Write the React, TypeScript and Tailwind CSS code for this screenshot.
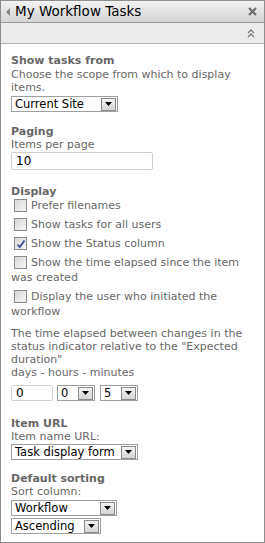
import React from "react";

const font = { fontFamily: '"DejaVu Sans", Verdana, sans-serif' };

function Arrow() {
  return (
    <span className="ml-[2px] flex h-[13px] w-[15px] shrink-0 items-center justify-center border border-[#8a8a8a] bg-gradient-to-b from-[#f4f4f4] to-[#d4d4d4]">
      <svg width="7" height="4" viewBox="0 0 7 4">
        <path d="M0 0h7L3.5 4z" fill="#000" />
      </svg>
    </span>
  );
}

function Select({ value, width }: { value: string; width: string }) {
  return (
    <div
      className={`flex h-[16px] items-center whitespace-nowrap border border-[#a0a0a0] bg-white pl-[3px] pr-[1px] text-[11.5px] leading-[14px] text-black ${width}`}
    >
      <span className="flex-1">{value}</span>
      <Arrow />
    </div>
  );
}

function Check({ label, checked }: { label: string; checked?: boolean }) {
  return (
    <div className="mt-[4px] leading-[15px]">
      <span className="relative ml-[3px] mr-[4px] inline-block h-[13px] w-[13px] border border-[#8a8a8a] bg-gradient-to-br from-[#d8d8d8] to-[#f6f6f6] align-[-3px]">
        {checked && (
          <svg className="absolute left-[1px] top-[1px]" width="10" height="10" viewBox="0 0 10 10">
            <path d="M1.5 5.5l2.3 2.5L8.5 1.5" stroke="#3c4f9a" strokeWidth="1.8" fill="none" />
          </svg>
        )}
      </span>
      {label}
    </div>
  );
}

function Heading({ children }: { children: React.ReactNode }) {
  return <div className="font-bold leading-[13px]">{children}</div>;
}

export default function App() {
  return (
    <div style={font} className="h-[543px] w-[265px] bg-white">
      <div className="flex h-[543px] flex-col border border-[#8e8e8e]">
        <div className="flex h-[22px] shrink-0 items-center border-b border-[#9c9c9c] bg-gradient-to-b from-[#f3f3f3] to-[#d3d3d3]">
          <svg className="ml-[5px] mr-[5px]" width="4" height="8" viewBox="0 0 4 8">
            <path d="M4 0v8L0 4z" fill="#8a8a8a" />
          </svg>
          <span className="flex-1 text-[13.5px] text-black">My Workflow Tasks</span>
          <svg className="mr-[7px]" width="9" height="9" viewBox="0 0 9 9">
            <path d="M1 1l7 7M8 1L1 8" stroke="#6e6e6e" strokeWidth="2.2" />
          </svg>
        </div>
        <div className="flex h-[21px] shrink-0 items-center justify-end border-b border-[#b4b4b4] bg-[#ebebeb] pr-[9px]">
          <svg width="8" height="9" viewBox="0 0 8 9">
            <path d="M1 4l3-3 3 3M1 8l3-3 3 3" stroke="#7a7a7a" strokeWidth="1.3" fill="none" />
          </svg>
        </div>
        <div className="flex-1 pl-[10px] pt-[10px] text-[11px] leading-[13px] text-[#676767]">
          <Heading>Show tasks from</Heading>
          <div className="mt-[1px] pr-[10px]">Choose the scope from which to display items.</div>
          <div className="mt-[2px]">
            <Select value="Current Site" width="w-[107px]" />
          </div>

          <div className="mt-[13px]">
            <Heading>Paging</Heading>
          </div>
          <div>Items per page</div>
          <div className="mt-[1px] flex h-[18px] w-[142px] items-center rounded-[2px] border border-[#cfcfcf] pl-[4px] text-[12px] text-black">
            10
          </div>

          <div className="mt-[15px]">
            <Heading>Display</Heading>
          </div>
          <div className="-mt-[4px] pr-[6px]">
            <Check label="Prefer filenames" />
            <Check label="Show tasks for all users" />
            <Check label="Show the Status column" checked />
            <Check label="Show the time elapsed since the item was created" />
            <Check label="Display the user who initiated the workflow" />
          </div>

          <div className="mt-[8px] pr-[8px]">
            The time elapsed between changes in the status indicator relative to the "Expected duration"
          </div>
          <div>days - hours - minutes</div>
          <div className="mt-[6px] flex items-center">
            <div className="flex h-[16px] w-[42px] items-center rounded-[2px] border border-[#cfcfcf] pl-[4px] text-[12px] leading-[14px] text-black">
              0
            </div>
            <div className="ml-[4px]">
              <Select value="0" width="w-[38px]" />
            </div>
            <div className="ml-[5px]">
              <Select value="5" width="w-[38px]" />
            </div>
          </div>

          <div className="mt-[16px]">
            <Heading>Item URL</Heading>
          </div>
          <div>Item name URL:</div>
          <div className="mt-[1px]">
            <Select value="Task display form" width="w-[127px]" />
          </div>

          <div className="mt-[12px]">
            <Heading>Default sorting</Heading>
          </div>
          <div>Sort column:</div>
          <div className="mt-[2px]">
            <Select value="Workflow" width="w-[106px]" />
          </div>
          <div className="mt-[2px]">
            <Select value="Ascending" width="w-[90px]" />
          </div>
        </div>
      </div>
    </div>
  );
}
